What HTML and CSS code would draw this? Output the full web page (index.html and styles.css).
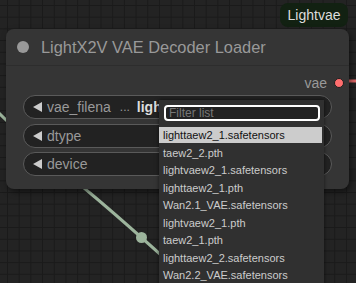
FILE: index.html
```html
<!DOCTYPE html>
<html lang="en">
<head>
    <meta charset="UTF-8">
    <title>LightX2V VAE Decoder Loader</title>
    <link rel="stylesheet" href="styles.css">
</head>
<body>
    <div class="canvas">
        <svg class="links" width="356" height="283" viewBox="0 0 356 283">
            <path d="M -6 108 C 20 135, 60 168, 90 193 S 140 236, 180 272" stroke="#9cb49c" stroke-width="3" fill="none"/>
            <circle cx="141.5" cy="237.5" r="5.5" fill="#9cb49c"/>
            <path d="M 345 81 L 360 81" stroke="#e06666" stroke-width="3" fill="none"/>
        </svg>

        <div class="group-badge">Lightvae</div>

        <div class="node">
            <div class="node-title">
                <span class="title-dot"></span>
                <span class="title-text">LightX2V VAE Decoder Loader</span>
            </div>
            <div class="node-body">
                <div class="output-row">
                    <span class="output-name">vae</span>
                    <span class="output-dot"></span>
                </div>
                <div class="widget">
                    <span class="arrow-left"></span>
                    <span class="w-label">vae_filena</span>
                    <span class="w-dots">...</span>
                    <span class="w-value">lighttaew2_1.safetensors</span>
                    <span class="arrow-right"></span>
                </div>
                <div class="widget">
                    <span class="arrow-left"></span>
                    <span class="w-label">dtype</span>
                    <span class="arrow-right"></span>
                </div>
                <div class="widget">
                    <span class="arrow-left"></span>
                    <span class="w-label">device</span>
                    <span class="arrow-right"></span>
                </div>
            </div>
        </div>

        <div class="dropdown">
            <input class="filter" type="text" placeholder="Filter list">
            <div class="menu-item selected">lighttaew2_1.safetensors</div>
            <div class="menu-item">taew2_2.pth</div>
            <div class="menu-item">lightvaew2_1.safetensors</div>
            <div class="menu-item">lighttaew2_1.pth</div>
            <div class="menu-item">Wan2.1_VAE.safetensors</div>
            <div class="menu-item">lightvaew2_1.pth</div>
            <div class="menu-item">taew2_1.pth</div>
            <div class="menu-item">lighttaew2_2.safetensors</div>
            <div class="menu-item">Wan2.2_VAE.safetensors</div>
        </div>
    </div>
</body>
</html>
```

FILE: styles.css
```css
body {
    margin: 0;
    font-family: 'Liberation Sans', Arial, sans-serif;
    background: #222222;
}
.canvas {
    position: relative;
    width: 356px;
    height: 283px;
    overflow: hidden;
    background-color: #232323;
    background-image:
        linear-gradient(to right, #1a1a1a 1px, transparent 1px),
        linear-gradient(to bottom, #1a1a1a 1px, transparent 1px);
    background-size: 11.7px 11.7px;
    background-position: 7px 5px;
}
.links {
    position: absolute;
    left: 0;
    top: 0;
}
.group-badge {
    position: absolute;
    left: 280px;
    top: 3px;
    width: 68px;
    height: 24px;
    border-radius: 8px;
    background: #122112;
    color: #dddddd;
    font-size: 14px;
    line-height: 24px;
    text-align: center;
}
.node {
    position: absolute;
    left: 6px;
    top: 29px;
    width: 343px;
    height: 160px;
    background: #353535;
    border-radius: 8px;
    box-shadow: 2px 3px 6px rgba(0, 0, 0, 0.5);
}
.node-title {
    height: 36px;
    display: flex;
    align-items: center;
    border-bottom: 1px solid #2d2d2d;
}
.title-dot {
    width: 12px;
    height: 12px;
    margin-left: 11px;
    margin-right: 12px;
    border-radius: 50%;
    background: #999999;
}
.title-text {
    color: #999999;
    font-size: 16.4px;
}
.node-body {
    padding: 0 17px;
}
.output-row {
    height: 20px;
    margin: 7px -12px 2px 0;
    display: flex;
    align-items: center;
    justify-content: flex-end;
}
.output-name {
    color: #999999;
    font-size: 14px;
    margin-right: 7px;
}
.output-dot {
    width: 8px;
    height: 8px;
    border-radius: 50%;
    background: #ff6e6e;
    border: 1.5px solid #1e1e1e;
}
.widget {
    height: 22px;
    margin-bottom: 4.5px;
    border: 1px solid #5a5a5a;
    border-radius: 12px;
    background: #222222;
    display: flex;
    align-items: center;
    padding: 0 9px 0 9px;
    font-size: 14px;
    color: #999999;
    overflow: hidden;
    white-space: nowrap;
}
.arrow-left, .arrow-right {
    flex: none;
    width: 0;
    height: 0;
    border-top: 5px solid transparent;
    border-bottom: 5px solid transparent;
}
.arrow-left {
    border-right: 9px solid #cccccc;
}
.arrow-right {
    margin-left: auto;
    border-left: 9px solid #cccccc;
}
.w-label {
    margin-left: 5px;
}
.w-dots {
    margin-left: 9px;
    font-size: 12px;
}
.w-value {
    margin-left: 7px;
    margin-right: 6px;
    color: #dddddd;
    font-weight: bold;
}
.dropdown {
    position: absolute;
    left: 159px;
    top: 100px;
    width: 165px;
    height: 190px;
    background: #303030;
    box-shadow: 0 0 4px rgba(0, 0, 0, 0.6);
    padding-top: 5px;
    box-sizing: border-box;
}
.filter {
    display: block;
    margin: 0 0 6px 5px;
    width: 156px;
    height: 16px;
    box-sizing: border-box;
    border: 2px solid #ffffff;
    border-radius: 4px;
    background: #222222;
    padding: 0 3px;
    font-family: 'Liberation Sans', Arial, sans-serif;
    font-size: 12px;
    color: #dddddd;
    outline: none;
}
.filter::placeholder {
    color: #777777;
}
.menu-item {
    width: 163px;
    box-sizing: border-box;
    height: 16px;
    line-height: 16px;
    margin-bottom: 1.5px;
    padding-left: 4px;
    font-size: 11px;
    color: #cccccc;
    white-space: nowrap;
}
.menu-item.selected {
    background: #cccccc;
    color: #111111;
}
```
